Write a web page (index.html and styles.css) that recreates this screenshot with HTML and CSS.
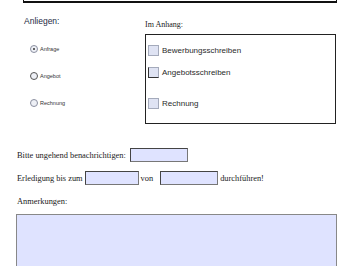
FILE: index.html
```html
<!DOCTYPE html>
<html lang="de">
<head>
    <meta charset="UTF-8">
    <title>Formular</title>
    <link rel="stylesheet" href="styles.css">
</head>
<body>
    <div class="top-box"></div>
    <div class="upper">
        <div class="anliegen">
            <div class="anliegen-title">Anliegen:</div>
            <div class="radio-list">
                <label class="radio-row"><span class="radio checked"></span>Anfrage</label>
                <label class="radio-row"><span class="radio dark"></span>Angebot</label>
                <label class="radio-row"><span class="radio"></span>Rechnung</label>
            </div>
        </div>
        <div class="anhang">
            <div class="anhang-title">Im Anhang:</div>
            <div class="anhang-box">
                <label class="check-row"><span class="check"></span>Bewerbungsschreiben</label>
                <label class="check-row"><span class="check focus"></span>Angebotsschreiben</label>
                <label class="check-row last"><span class="check"></span>Rechnung</label>
            </div>
        </div>
    </div>
    <div class="lower">
        <div class="form-row">
            Bitte ungehend benachrichtigen:
            <span class="field field-notify"></span>
        </div>
        <div class="form-row tight">
            Erledigung bis zum
            <span class="field"></span>
            von
            <span class="field field-von"></span>
            durchführen!
        </div>
        <div class="form-row notes-label">Anmerkungen:</div>
        <div class="notes"></div>
    </div>
</body>
</html>
```

FILE: styles.css
```css
body {
    margin: 0;
    background: #ffffff;
    font-family: 'Liberation Serif', serif;
    color: #1e2430;
    overflow: hidden;
}
.top-box {
    margin: -20px 22px 0 23px;
    height: 20px;
    border: 1px solid #111;
    border-bottom-width: 2px;
}
.upper {
    display: flex;
    align-items: flex-start;
}
.anliegen {
    width: 121px;
    padding-left: 24px;
}
.anliegen-title {
    margin-top: 12px;
    font-family: 'Liberation Sans', sans-serif;
    font-size: 8.5px;
    line-height: 13px;
    color: #1d2a44;
}
.radio-list {
    margin-top: 7px;
}
.radio-row {
    display: flex;
    align-items: center;
    height: 27px;
    padding-left: 6px;
    font-family: 'Liberation Sans', sans-serif;
    font-size: 5.5px;
    color: #333;
}
.radio {
    width: 6px;
    height: 6px;
    margin-right: 2px;
    border: 1px solid #8a8fa0;
    border-radius: 50%;
    background: #eef0f6;
    position: relative;
}
.radio.dark {
    border-color: #555;
}
.radio.checked::after {
    content: '';
    position: absolute;
    left: 2px;
    top: 2px;
    width: 2px;
    height: 2px;
    border-radius: 50%;
    background: #333;
}
.anhang {
    width: 191px;
}
.anhang-title {
    margin-top: 16px;
    font-size: 8px;
    line-height: 11px;
    color: #1a1a1a;
}
.anhang-box {
    margin-top: 4px;
    height: 90px;
    border: 1px solid #222;
    padding: 8px 0 0 2px;
    box-sizing: border-box;
}
.check-row {
    display: flex;
    align-items: center;
    height: 14px;
    margin-bottom: 8px;
    font-family: 'Liberation Sans', sans-serif;
    font-size: 8px;
    color: #2a2a2a;
}
.check-row.last {
    margin-top: 17px;
}
.check {
    width: 9px;
    height: 9px;
    margin-right: 3px;
    border: 1px solid #a4aabb;
    background: #dfe3f3;
}
.check.focus {
    border-left-color: #333;
    border-bottom-color: #333;
}
.lower {
    padding-left: 17px;
    margin-top: 24px;
}
.form-row {
    display: flex;
    align-items: center;
    gap: 4px;
    height: 14px;
    margin-bottom: 9px;
    font-size: 8.4px;
    color: #1a1a1a;
}
.form-row.tight {
    gap: 2px;
}
.field {
    width: 52px;
    height: 12px;
    border: 1px solid #444;
    border-right-color: #777;
    border-bottom-color: #777;
    background: #dfe3ff;
}
.field-notify {
    width: 56px;
}
.field-von {
    width: 56px;
    margin-left: 5px;
}
.notes-label {
    margin-bottom: 6px;
}
.notes {
    margin-left: -1px;
    width: 319px;
    height: 80px;
    border: 1px solid #888;
    background: #dfe3ff;
}
```
